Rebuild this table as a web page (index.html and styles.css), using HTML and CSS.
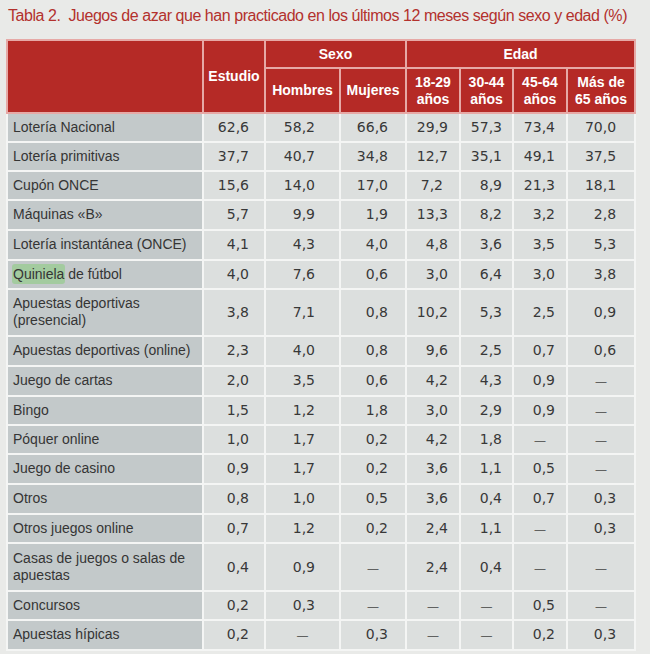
FILE: index.html
```html
<!DOCTYPE html>
<html lang="es">
<head>
<meta charset="utf-8">
<title>Tabla 2</title>
<link rel="stylesheet" href="styles.css">
</head>
<body>
<div class="page">
  <h1 class="title">Tabla 2.&nbsp; Juegos de azar que han practicado en los últimos 12 meses según sexo y edad (%)</h1>
  <table class="data">
    <colgroup>
      <col class="c-lab"><col class="c-est"><col class="c-hom"><col class="c-muj">
      <col class="c-a1"><col class="c-a2"><col class="c-a3"><col class="c-a4">
    </colgroup>
    <thead>
      <tr class="h1">
        <th rowspan="2"></th>
        <th rowspan="2">Estudio</th>
        <th colspan="2">Sexo</th>
        <th colspan="4">Edad</th>
      </tr>
      <tr class="h2">
        <th>Hombres</th>
        <th>Mujeres</th>
        <th>18-29<br>años</th>
        <th>30-44<br>años</th>
        <th>45-64<br>años</th>
        <th>Más de<br>65 años</th>
      </tr>
    </thead>
    <tbody>
      <tr><td>Lotería Nacional</td><td>62,6</td><td>58,2</td><td>66,6</td><td>29,9</td><td>57,3</td><td>73,4</td><td>70,0</td></tr>
      <tr><td>Lotería primitivas</td><td>37,7</td><td>40,7</td><td>34,8</td><td>12,7</td><td>35,1</td><td>49,1</td><td>37,5</td></tr>
      <tr><td>Cupón ONCE</td><td>15,6</td><td>14,0</td><td>17,0</td><td class="shift">7,2</td><td>8,9</td><td>21,3</td><td>18,1</td></tr>
      <tr class="r30"><td>Máquinas «B»</td><td>5,7</td><td>9,9</td><td>1,9</td><td>13,3</td><td>8,2</td><td>3,2</td><td>2,8</td></tr>
      <tr class="r30"><td>Lotería instantánea (ONCE)</td><td>4,1</td><td>4,3</td><td>4,0</td><td>4,8</td><td>3,6</td><td>3,5</td><td>5,3</td></tr>
      <tr><td><span class="hl">Quiniela</span> de fútbol</td><td>4,0</td><td>7,6</td><td>0,6</td><td>3,0</td><td>6,4</td><td>3,0</td><td>3,8</td></tr>
      <tr class="r30"><td>Apuestas deportivas<br>(presencial)</td><td>3,8</td><td>7,1</td><td>0,8</td><td>10,2</td><td>5,3</td><td>2,5</td><td>0,9</td></tr>
      <tr class="r30"><td>Apuestas deportivas (online)</td><td>2,3</td><td>4,0</td><td>0,8</td><td>9,6</td><td>2,5</td><td>0,7</td><td>0,6</td></tr>
      <tr class="r30"><td>Juego de cartas</td><td>2,0</td><td>3,5</td><td>0,6</td><td>4,2</td><td>4,3</td><td>0,9</td><td class="d"><span>—</span></td></tr>
      <tr><td>Bingo</td><td>1,5</td><td>1,2</td><td>1,8</td><td>3,0</td><td>2,9</td><td>0,9</td><td class="d"><span>—</span></td></tr>
      <tr><td>Póquer online</td><td>1,0</td><td>1,7</td><td>0,2</td><td>4,2</td><td>1,8</td><td class="d"><span>—</span></td><td class="d"><span>—</span></td></tr>
      <tr class="r30"><td>Juego de casino</td><td>0,9</td><td>1,7</td><td>0,2</td><td>3,6</td><td>1,1</td><td>0,5</td><td class="d"><span>—</span></td></tr>
      <tr class="r30"><td>Otros</td><td>0,8</td><td>1,0</td><td>0,5</td><td>3,6</td><td>0,4</td><td>0,7</td><td>0,3</td></tr>
      <tr><td>Otros juegos online</td><td>0,7</td><td>1,2</td><td>0,2</td><td>2,4</td><td>1,1</td><td class="d"><span>—</span></td><td>0,3</td></tr>
      <tr class="r30 r31"><td>Casas de juegos o salas de<br>apuestas</td><td>0,4</td><td>0,9</td><td class="d"><span>—</span></td><td>2,4</td><td>0,4</td><td class="d"><span>—</span></td><td class="d"><span>—</span></td></tr>
      <tr><td>Concursos</td><td>0,2</td><td>0,3</td><td class="d"><span>—</span></td><td class="d"><span>—</span></td><td class="d"><span>—</span></td><td>0,5</td><td class="d"><span>—</span></td></tr>
      <tr class="r30"><td>Apuestas hípicas</td><td>0,2</td><td class="d"><span>—</span></td><td>0,3</td><td class="d"><span>—</span></td><td class="d"><span>—</span></td><td>0,2</td><td>0,3</td></tr>
    </tbody>
  </table>
</div>
</body>
</html>
```

FILE: styles.css
```css
html, body {
  margin: 0;
  padding: 0;
  background: #e9eae8;
}

body {
  font-family: "Liberation Sans", Arial, sans-serif;
  color: #353535;
}

.page {
  padding: 0 0 0 6px;
}

.title {
  margin: 0;
  padding: 6px 0 0 2px;
  height: 39px;
  box-sizing: border-box;
  font-size: 16px;
  letter-spacing: -0.45px;
  line-height: 20px;
  font-weight: normal;
  color: #b3312d;
  white-space: nowrap;
}

.data {
  border-collapse: collapse;
  table-layout: fixed;
  width: 628px;
}

.c-lab { width: 196px; }
.c-est { width: 62px; }
.c-hom { width: 75px; }
.c-muj { width: 66px; }
.c-a1 { width: 54px; }
.c-a2 { width: 53px; }
.c-a3 { width: 54px; }
.c-a4 { width: 68px; }

.data th {
  background: #b52a26;
  color: #ffffff;
  font-weight: bold;
  font-size: 14px;
  line-height: 16.5px;
  padding: 0 2px;
  text-align: center;
  border: 2px solid #e6a9a6;
}

.data tr.h1 { height: 28px; }
.data tr.h2 { height: 45px; }

.data td {
  background: #dcdfde;
  border: 2px solid #f4f5f4;
  padding: 5px 6px;
  line-height: 17px;
  font-size: 14px;
  vertical-align: middle;
  text-align: right;
  font-family: "DejaVu Sans", sans-serif;
  color: #383838;
}

.data tr.r30 td { padding-bottom: 6px; }
.data tr.r31 td { padding-top: 6px; }

.data td:first-child {
  background: #c3c9ca;
  text-align: left;
  font-family: "Liberation Sans", Arial, sans-serif;
  padding-left: 5px;
  color: #353535;
}

.data td:nth-child(2) { padding-right: 15px; }
.data td:nth-child(3) { padding-right: 24px; }
.data td:nth-child(4) { padding-right: 17px; }
.data td:nth-child(5) { padding-right: 11px; }
.data td:nth-child(6) { padding-right: 10px; }
.data td:nth-child(7) { padding-right: 11px; }
.data td:nth-child(8) { padding-right: 18px; }

.data td.shift { padding-right: 16px; }

.data td.d {
  text-align: center;
  padding-left: 0;
  padding-right: 0;
  font-family: "Liberation Sans", Arial, sans-serif;
}

.data td.d span {
  font-size: 11px;
  line-height: 10px;
  color: #444;
}

.hl {
  background: #a3cb9f;
  border-radius: 3px;
  padding: 2px 1px;
  margin: 0 -1px;
}
```
